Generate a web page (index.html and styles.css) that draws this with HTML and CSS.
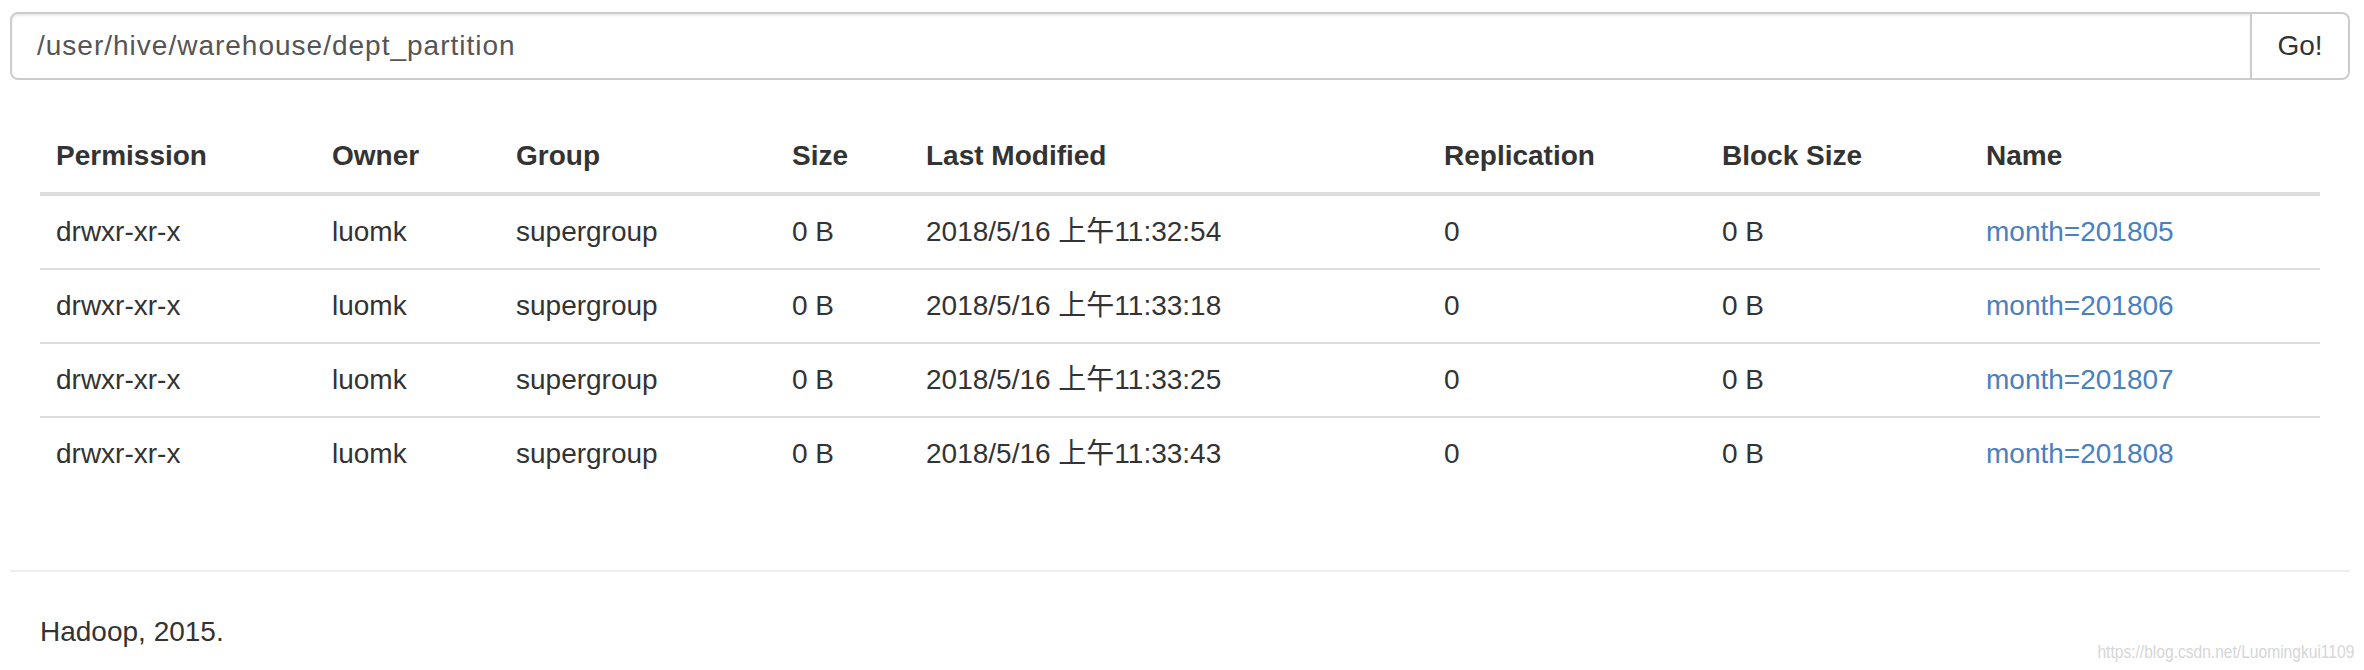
FILE: index.html
```html
<!DOCTYPE html>
<html lang="zh-CN">
<head>
<meta charset="utf-8">
<title>Browse Directory</title>
<link rel="stylesheet" href="styles.css">
</head>
<body>
<div class="page">
  <form class="path-bar">
    <input class="path-input" type="text" value="/user/hive/warehouse/dept_partition">
    <button class="path-go" type="button">Go!</button>
  </form>

  <div class="listing">
    <table class="files">
      <colgroup>
        <col class="c-perm"><col class="c-owner"><col class="c-group"><col class="c-size">
        <col class="c-mod"><col class="c-repl"><col class="c-block"><col class="c-name">
      </colgroup>
      <thead>
        <tr>
          <th>Permission</th><th>Owner</th><th>Group</th><th>Size</th>
          <th>Last Modified</th><th>Replication</th><th>Block Size</th><th>Name</th>
        </tr>
      </thead>
      <tbody>
        <tr>
          <td>drwxr-xr-x</td><td>luomk</td><td>supergroup</td><td>0 B</td>
          <td>2018/5/16 上午11:32:54</td><td>0</td><td>0 B</td>
          <td><a href="#">month=201805</a></td>
        </tr>
        <tr>
          <td>drwxr-xr-x</td><td>luomk</td><td>supergroup</td><td>0 B</td>
          <td>2018/5/16 上午11:33:18</td><td>0</td><td>0 B</td>
          <td><a href="#">month=201806</a></td>
        </tr>
        <tr>
          <td>drwxr-xr-x</td><td>luomk</td><td>supergroup</td><td>0 B</td>
          <td>2018/5/16 上午11:33:25</td><td>0</td><td>0 B</td>
          <td><a href="#">month=201807</a></td>
        </tr>
        <tr>
          <td>drwxr-xr-x</td><td>luomk</td><td>supergroup</td><td>0 B</td>
          <td>2018/5/16 上午11:33:43</td><td>0</td><td>0 B</td>
          <td><a href="#">month=201808</a></td>
        </tr>
      </tbody>
    </table>
  </div>

  <hr class="rule">
  <footer class="footer">
    <p>Hadoop, 2015.</p>
  </footer>
</div>
<div class="watermark">https://blog.csdn.net/Luomingkui1109</div>
</body>
</html>
```

FILE: styles.css
```css
* {
  box-sizing: border-box;
}

html, body {
  margin: 0;
  padding: 0;
  background: #fff;
}

body {
  font-family: "Liberation Sans", "Noto Sans CJK SC", Arial, sans-serif;
  font-size: 28px;
  line-height: 40px;
  color: #333;
  position: relative;
  min-height: 670px;
}

.page {
  margin: 0 14px 0 10px;
  padding-top: 12px;
}

/* directory path input with attached button */
.path-bar {
  display: flex;
  margin: 0;
}

.path-input {
  flex: 1;
  height: 68px;
  margin: 0;
  padding: 12px 24px 12px 25px;
  font: inherit;
  font-size: 28px;
  line-height: 40px;
  letter-spacing: 1px;
  color: #555;
  background: #fff;
  border: 2px solid #ccc;
  border-radius: 8px 0 0 8px;
  box-shadow: inset 0 2px 2px rgba(0, 0, 0, 0.075);
  outline: none;
}

.path-go {
  min-width: 100px;
  height: 68px;
  margin: 0 0 0 -2px;
  padding: 12px 24px;
  font: inherit;
  font-size: 28px;
  line-height: 40px;
  color: #333;
  background: #fff;
  border: 2px solid #ccc;
  border-radius: 0 8px 8px 0;
}

/* file listing table */
.listing {
  padding: 40px 30px;
}

.files {
  width: 100%;
  table-layout: fixed;
  border-collapse: collapse;
  border-spacing: 0;
  margin-bottom: 40px;
}

.c-perm  { width: 276px; }
.c-owner { width: 184px; }
.c-group { width: 276px; }
.c-size  { width: 134px; }
.c-mod   { width: 518px; }
.c-repl  { width: 278px; }
.c-block { width: 264px; }
.c-name  { width: 350px; }

.files th,
.files td {
  padding: 16px;
  text-align: left;
  line-height: 40px;
  white-space: nowrap;
}

.files th {
  font-weight: bold;
  vertical-align: bottom;
  border-bottom: 4px solid #ddd;
}

.files td {
  vertical-align: top;
  border-top: 2px solid #ddd;
}

.files a {
  color: #4a80c0;
  text-decoration: none;
}

/* footer */
.rule {
  margin: 0;
  height: 0;
  border: 0;
  border-top: 2px solid #eee;
}

.footer {
  padding: 40px 30px 0;
}

.footer p {
  margin: 0;
}

.watermark {
  position: absolute;
  right: 10px;
  bottom: 6px;
  font-size: 19px;
  line-height: 24px;
  color: #d6d6d6;
  transform: scaleX(0.82);
  transform-origin: right bottom;
}
```
